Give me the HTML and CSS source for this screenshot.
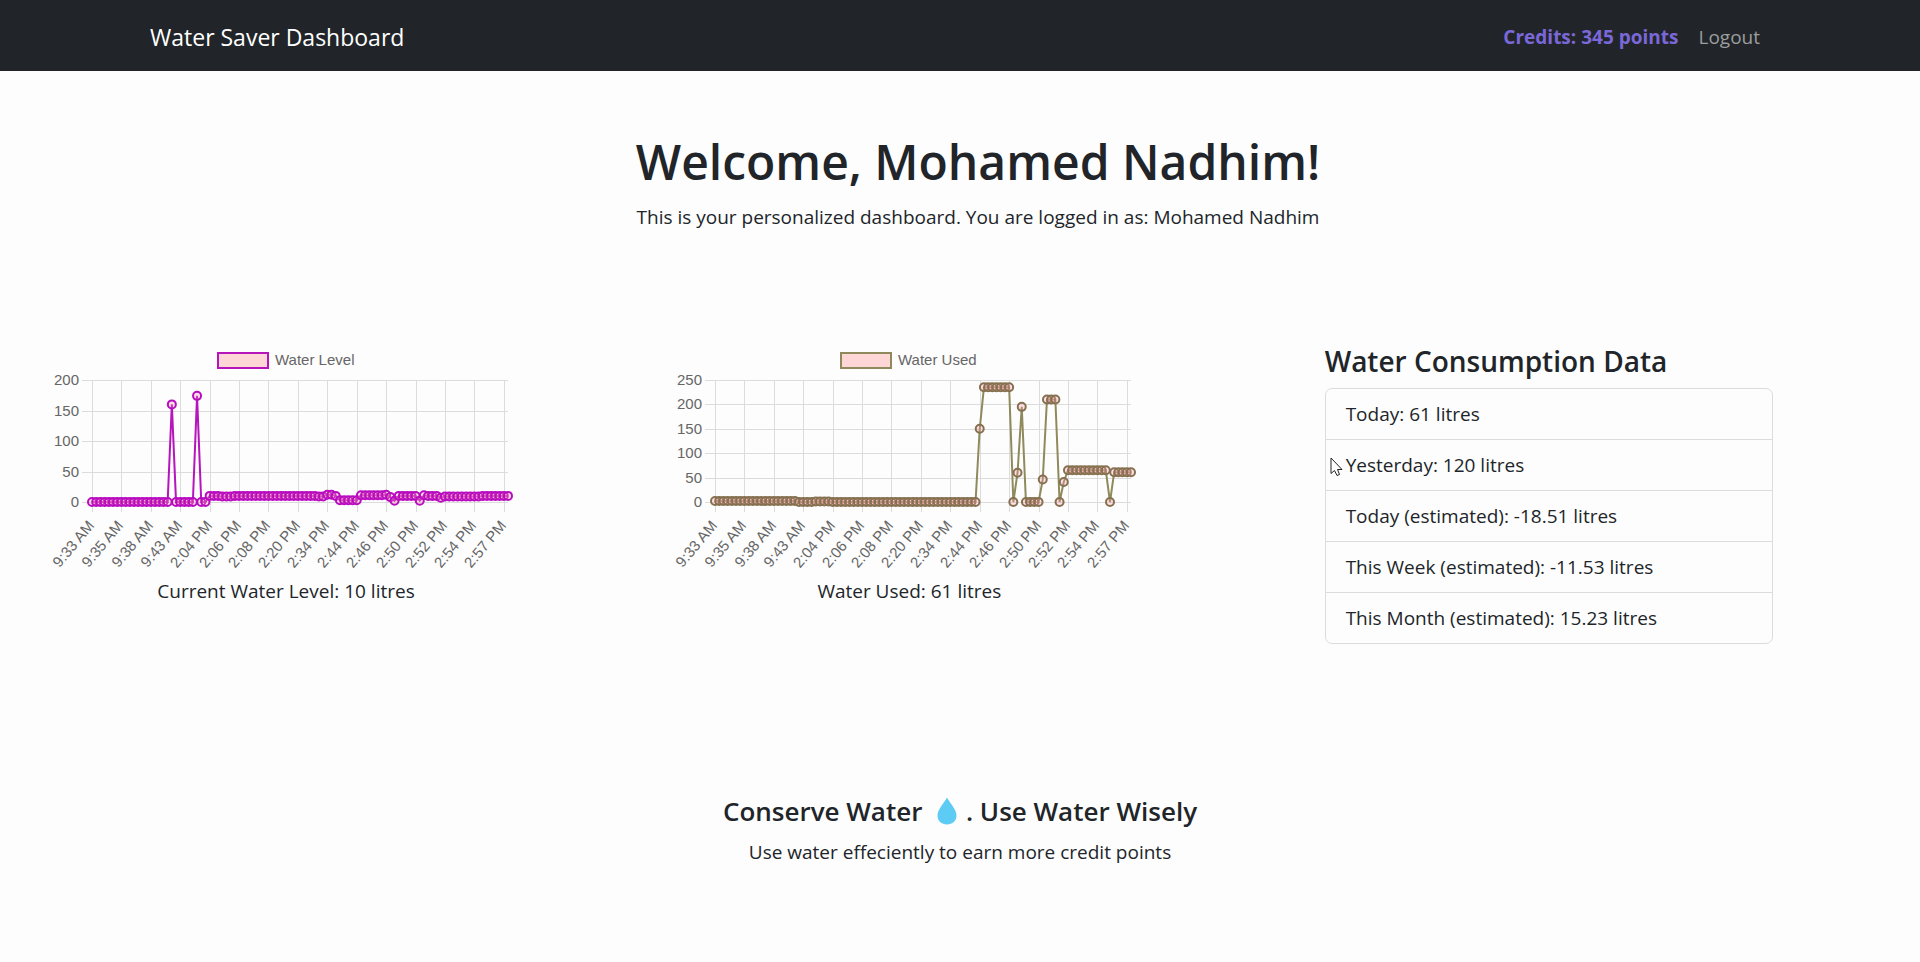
FILE: index.html
```html
<!DOCTYPE html>
<html lang="en">
<head>
<meta charset="utf-8">
<meta name="viewport" content="width=device-width, initial-scale=1">
<title>Water Saver Dashboard</title>
<link rel="stylesheet" href="styles.css">
</head>
<body>
<header class="navbar">
  <nav class="navbar-inner">
    <a class="brand" href="#">Water Saver Dashboard</a>
    <div class="nav-links">
      <span class="credits">Credits: 345 points</span>
      <a class="logout" href="#">Logout</a>
    </div>
  </nav>
</header>
<main>
  <section class="welcome">
    <h1>Welcome, Mohamed Nadhim!</h1>
    <p>This is your personalized dashboard. You are logged in as: Mohamed Nadhim</p>
  </section>
  <section class="panels">
    <figure class="chart-panel">
      <svg class="chart chart-level" id="level-chart" viewBox="0 0 472 232" role="img" aria-label="Water Level"></svg>
      <figcaption>Current Water Level: 10 litres</figcaption>
    </figure>
    <figure class="chart-panel">
      <svg class="chart chart-used" id="used-chart" viewBox="0 0 472 232" role="img" aria-label="Water Used"></svg>
      <figcaption>Water Used: 61 litres</figcaption>
    </figure>
    <div class="data-panel">
      <h2>Water Consumption Data</h2>
      <ul class="data-list">
        <li>Today: 61 litres</li>
        <li>Yesterday: 120 litres
          <svg class="pointer" viewBox="0 0 13 20" aria-hidden="true"><path d="M1 1V16.500L4.500 13.500L7 18.500L9.500 17.500L7.500 12.500H12Z"/></svg>
        </li>
        <li>Today (estimated): -18.51 litres</li>
        <li>This Week (estimated): -11.53 litres</li>
        <li>This Month (estimated): 15.23 litres</li>
      </ul>
    </div>
  </section>
</main>
<footer class="tips">
  <h2>Conserve Water <svg class="drop" viewBox="0 0 20 28" aria-hidden="true"><path d="M10 0.500C12 5 19.500 12 19.500 18.500C19.500 24 15.500 27.500 10 27.500S0.500 24 0.500 18.500C0.500 12 8 5 10 0.500Z"/></svg> . Use Water Wisely</h2>
  <p>Use water effeciently to earn more credit points</p>
</footer>
<script src="charts.js"></script>
</body>
</html>
```

FILE: styles.css
```css
* { box-sizing: border-box; }

body {
  margin: 0;
  background: #fdfdfd;
  color: #212529;
  font-family: "Open Sans", "Noto Sans", sans-serif;
  font-size: 19px;
  line-height: 30px;
}

h1, h2, p, ul, figure { margin: 0; padding: 0; }
h1, h2 { font-weight: 600; }
a { text-decoration: none; }

.navbar { background: #212529; }
.navbar-inner {
  display: flex;
  align-items: center;
  justify-content: space-between;
  max-width: 1650px;
  height: 71px;
  margin: 0 auto;
  padding: 2px 25px 0 15px;
}
.brand { color: #fff; font-size: 23px; }
.nav-links { display: flex; gap: 20px; }
.credits { color: #7b68d8; font-weight: 700; }
.logout { color: #9b9d9e; }

.welcome {
  padding: 61px 0 0 36px;
  text-align: center;
}
.welcome h1 { font-size: 48px; line-height: 60px; margin-bottom: 10px; }

.panels {
  display: grid;
  grid-template-columns: repeat(3, 1fr);
  padding: 112px 0 0 50px;
}
.chart-panel { width: 472px; max-width: 100%; text-align: center; }
.chart { display: block; width: 100%; font-family: "Liberation Sans", Arial, sans-serif; font-size: 15px; }
.chart text { fill: #666; }
.grid-line { stroke: #dcdcdc; stroke-width: 1; }
.series { fill: none; stroke-width: 2; }
.legend-box { fill: #ffd6d6; stroke-width: 2; }
.point { fill: #ff9eb0; fill-opacity: 0.3; stroke-width: 2; }
.chart-level .series, .chart-level .legend-box { stroke: #b515bb; }
.chart-used .series, .chart-used .legend-box { stroke: #8f8a5c; }
.chart-level .point { stroke: #b80cc0; }
.chart-used .point { stroke: #85704f; }

.data-panel { padding: 0 147px 0 28px; }
.data-panel h2 { font-size: 28px; line-height: 34px; margin-bottom: 10px; }
.data-list { list-style: none; border: 1px solid #dcdcdc; border-radius: 7px; }
.data-list li { position: relative; padding: 10px 20px; }
.data-list li + li { border-top: 1px solid #dcdcdc; }
.pointer { position: absolute; left: 4px; top: 17px; width: 13px; height: 20px; fill: #fff; stroke: #222; }

.tips { padding: 149px 0 80px; text-align: center; }
.tips h2 { font-size: 26px; line-height: 36px; margin-bottom: 8px; }
.drop { width: 20px; height: 28px; margin: 0 2px 0 8px; vertical-align: -4px; fill: #5dccf4; }
```

FILE: charts.js
```js
const PLOT = { left: 42, right: 458, top: 36, bottom: 158 };
const LABELS = ["9:33 AM", "9:35 AM", "9:38 AM", "9:43 AM", "2:04 PM", "2:06 PM", "2:08 PM", "2:20 PM",
  "2:34 PM", "2:44 PM", "2:46 PM", "2:50 PM", "2:52 PM", "2:54 PM", "2:57 PM"];

// Expands [value, count] pairs into a flat series.
const expand = (runs) => runs.flatMap(([value, count]) => Array(count).fill(value));

const level = expand([[0, 19], [160, 1], [0, 5], [174, 1], [0, 2], [10, 3], [9, 3], [10, 20], [9, 2],
  [12, 2], [10, 1], [3, 5], [11, 6], [12, 1], [8, 1], [2, 1], [10, 5], [2, 1], [11, 1], [10, 3], [7, 1], [9, 9], [10, 7]]);
const used = expand([[2, 20], [0, 4], [1, 4], [0, 35], [150, 1], [235, 7], [0, 1], [60, 1], [195, 1],
  [0, 4], [46, 1], [210, 3], [0, 1], [41, 1], [65, 10], [0, 1], [61, 5]]);

function drawChart(id, title, data, max) {
  const step = (PLOT.right - PLOT.left) / (data.length - 1);
  const x = (i) => PLOT.left + i * step;
  const y = (v) => PLOT.bottom - (v / max) * (PLOT.bottom - PLOT.top);
  const parts = [];
  for (let v = 0; v <= max; v += 50) {
    const gy = Math.round(y(v));
    parts.push(`<path class="grid-line" d="M${PLOT.left - 10} ${gy + 0.5}H${PLOT.right}"/>`);
    parts.push(`<text x="29" y="${gy + 5}" text-anchor="end">${v}</text>`);
  }
  LABELS.forEach((label, i) => {
    const gx = Math.round(x(i * 7));
    parts.push(`<path class="grid-line" d="M${gx + 0.5} ${PLOT.top}V${PLOT.bottom + 10}"/>`);
    parts.push(`<text text-anchor="end" transform="translate(${gx + 3} ${PLOT.bottom + 24}) rotate(-50)">${label}</text>`);
  });
  parts.push(`<rect class="legend-box" x="168" y="9" width="50" height="15"/>`);
  parts.push(`<text x="225" y="21">${title}</text>`);
  parts.push(`<polyline class="series" points="${data.map((v, i) => x(i) + "," + y(v)).join(" ")}"/>`);
  data.forEach((v, i) => parts.push(`<circle class="point" cx="${x(i)}" cy="${y(v)}" r="4"/>`));
  document.getElementById(id).innerHTML = parts.join("");
}

drawChart("level-chart", "Water Level", level, 200);
drawChart("used-chart", "Water Used", used, 250);
```
